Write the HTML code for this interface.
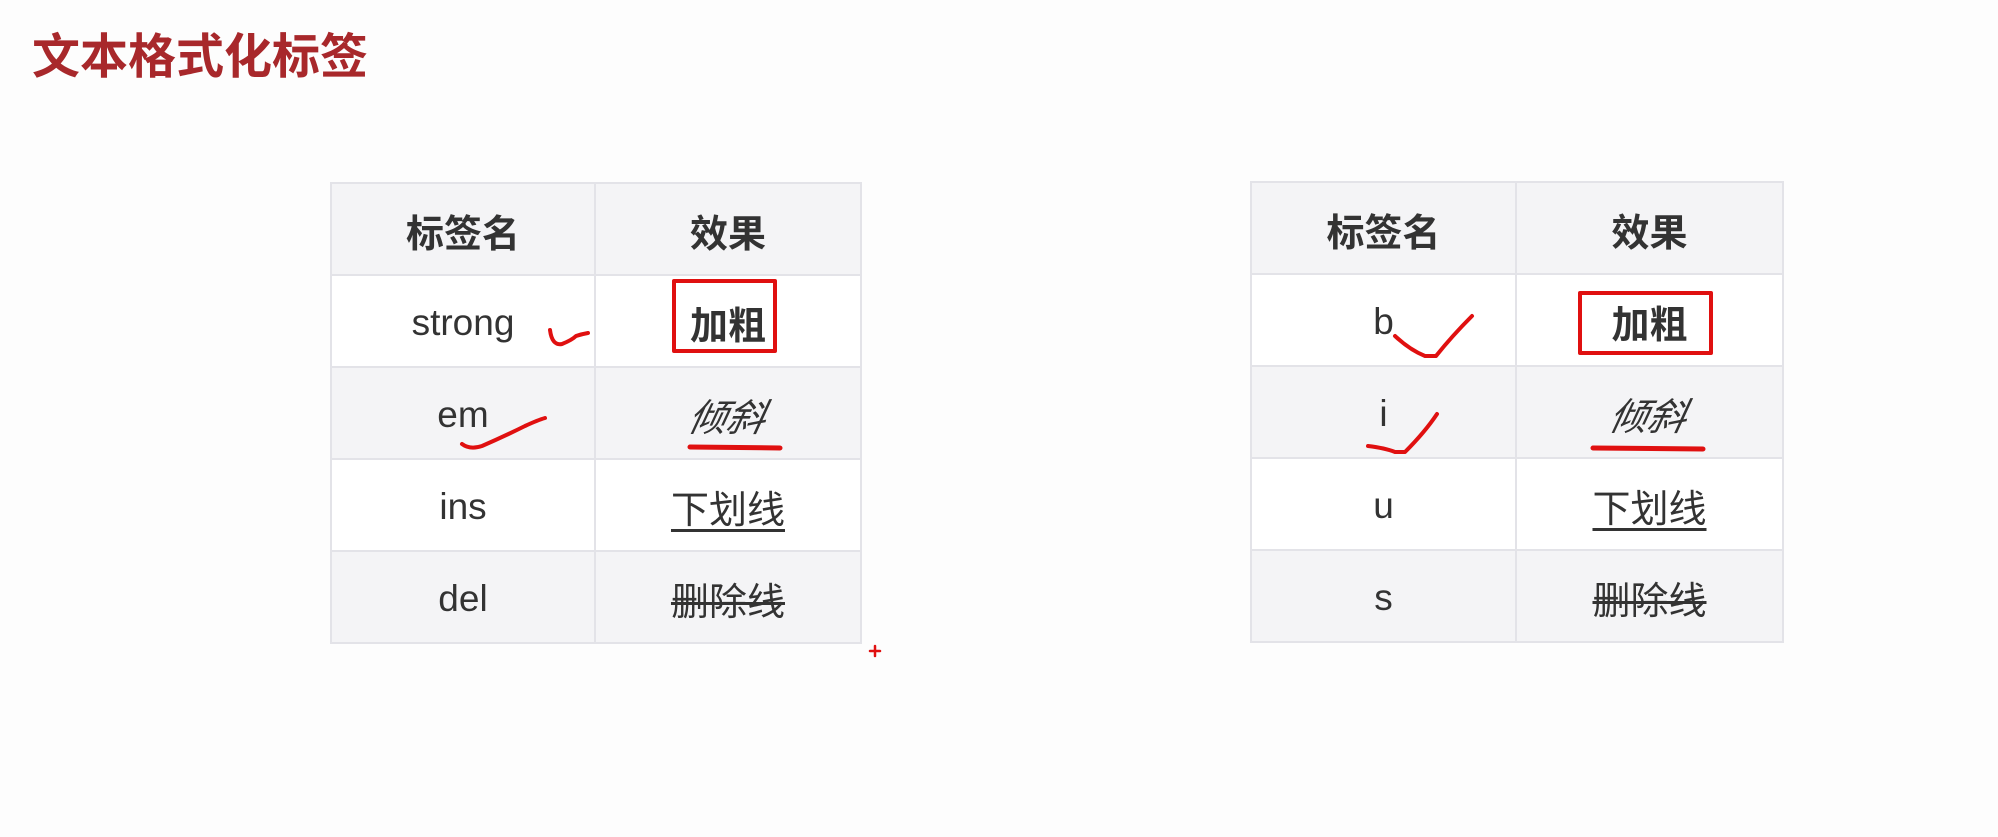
<!DOCTYPE html>
<html><head><meta charset="utf-8">
<style>
html,body{margin:0;padding:0;width:1998px;height:837px;background:#fdfdfd;overflow:hidden;font-family:"Liberation Sans","Noto Sans CJK SC",sans-serif;color:#333;}
.title{position:absolute;left:32px;top:27px;font-size:48px;font-weight:bold;color:#a8282b;line-height:62px;}
table{position:absolute;border-collapse:collapse;table-layout:fixed;}
td{border:2px solid #e3e3e8;text-align:center;height:92px;padding:3px 0 0 0;font-size:37px;box-sizing:border-box;}
tr:nth-child(odd) td{background:#f4f4f6;}
tr:nth-child(even) td{background:#fff;}
tr.h td{font-weight:bold;font-size:38px;color:#333;padding-top:2px;}
.bold{font-weight:bold;font-size:38px;}
.it{font-style:italic;font-size:38px;display:inline-block;transform:skewX(-12deg);}
.u{text-decoration:underline;font-size:38px;text-underline-offset:6px;}
.s{text-decoration:line-through;font-size:38px;}
svg{position:absolute;left:0;top:0;}
</style></head><body>
<div class="title">文本格式化标签</div>

<table style="left:330px;top:182px;width:530px;">
<colgroup><col style="width:264px"><col style="width:266px"></colgroup>
<tr class="h"><td>标签名</td><td>效果</td></tr>
<tr><td>strong</td><td><span class="bold">加粗</span></td></tr>
<tr><td>em</td><td><span class="it">倾斜</span></td></tr>
<tr><td>ins</td><td><span class="u">下划线</span></td></tr>
<tr><td>del</td><td><span class="s">删除线</span></td></tr>
</table>

<table style="left:1250px;top:181px;width:532px;">
<colgroup><col style="width:265px"><col style="width:267px"></colgroup>
<tr class="h"><td>标签名</td><td>效果</td></tr>
<tr><td>b</td><td><span class="bold">加粗</span></td></tr>
<tr><td>i</td><td><span class="it">倾斜</span></td></tr>
<tr><td>u</td><td><span class="u">下划线</span></td></tr>
<tr><td>s</td><td><span class="s">删除线</span></td></tr>
</table>

<svg width="1998" height="837" viewBox="0 0 1998 837">
<g fill="none" stroke="#e01010" stroke-linecap="round" stroke-linejoin="round">
<rect x="674" y="281" width="101" height="70" stroke-width="4"/>
<rect x="1580" y="293" width="131" height="60" stroke-width="4"/>
<path d="M550 330 Q552 346 562 344 Q572 340 576 336 Q582 334 588 333" stroke-width="4"/>
<path d="M462 444 Q470 450 482 446 Q505 436 525 426 Q538 420 545 418" stroke-width="4"/>
<path d="M690 447 L780 448" stroke-width="5"/>
<path d="M1395 336 Q1410 350 1425 356 L1436 356 Q1452 336 1472 316" stroke-width="4"/>
<path d="M1368 446 Q1385 448 1395 452 L1405 452 Q1425 432 1437 414" stroke-width="4"/>
<path d="M1593 448 L1703 449" stroke-width="5"/>
<path d="M870 651 L880 651 M875 646 L875 656" stroke-width="2.5"/>
</g>
</svg>
</body></html>
